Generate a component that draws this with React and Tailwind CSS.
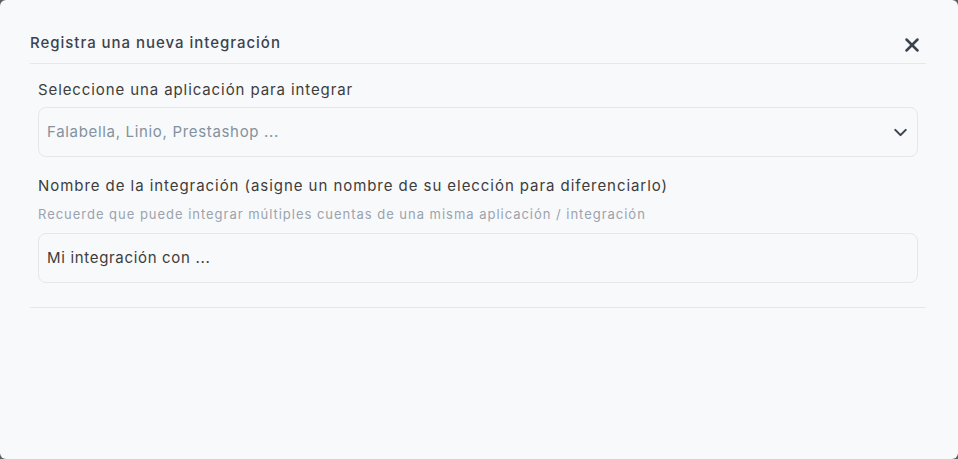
import React from 'react';
import { X, ChevronDown } from 'lucide-react';

export default function App() {
  return (
    <div className="h-[459px] w-[958px] bg-[#5b5f66] font-['Inter',sans-serif]">
      <div className="h-full w-full rounded-md bg-[#f8f9fb] pl-[30px] pr-[32px] pt-[30px]">
        {/* header */}
        <div className="flex h-[34px] items-start justify-between border-b border-[#e4e7ec]">
          <h2 className="text-[15px] font-medium leading-[26px] tracking-[0.065em] text-[#3b434e]">Registra una nueva integración</h2>
          <button className="mr-[3px] mt-[4px] text-[#3b434e]">
            <X size={22} strokeWidth={2.7} />
          </button>
        </div>

        <div className="border-b border-[#e4e7ec] pb-6 pl-2 pr-[8px]">
          <label className="mt-4 block text-[15px] leading-[20px] tracking-[0.06em] text-[#3d3d3d]">
            Seleccione una aplicación para integrar
          </label>
          <div className="mt-[7px] flex h-[50px] items-center justify-between rounded-lg border border-[#e5e7eb] bg-[#f8f9fb] pl-2 pr-[6px]">
            <span className="text-[15px] tracking-[0.045em] text-[#83929e]">Falabella, Linio, Prestashop ...</span>
            <ChevronDown size={21} strokeWidth={2.4} className="text-[#3b434e]" />
          </div>

          <label className="mt-[19px] block text-[15px] leading-[20px] tracking-[0.063em] text-[#3d3d3d]">
            Nombre de la integración (asigne un nombre de su elección para diferenciarlo)
          </label>
          <p className="mt-[10px] text-[13px] leading-[16px] tracking-[0.075em] text-[#9aa3ae]">
            Recuerde que puede integrar múltiples cuentas de una misma aplicación / integración
          </p>
          <div className="mt-[11px] flex h-[50px] items-center rounded-lg border border-[#e5e7eb] bg-[#f8f9fb] pl-2">
            <span className="text-[15px] tracking-[0.045em] text-[#3d3d3d]">Mi integración con ...</span>
          </div>
        </div>
      </div>
    </div>
  );
}
